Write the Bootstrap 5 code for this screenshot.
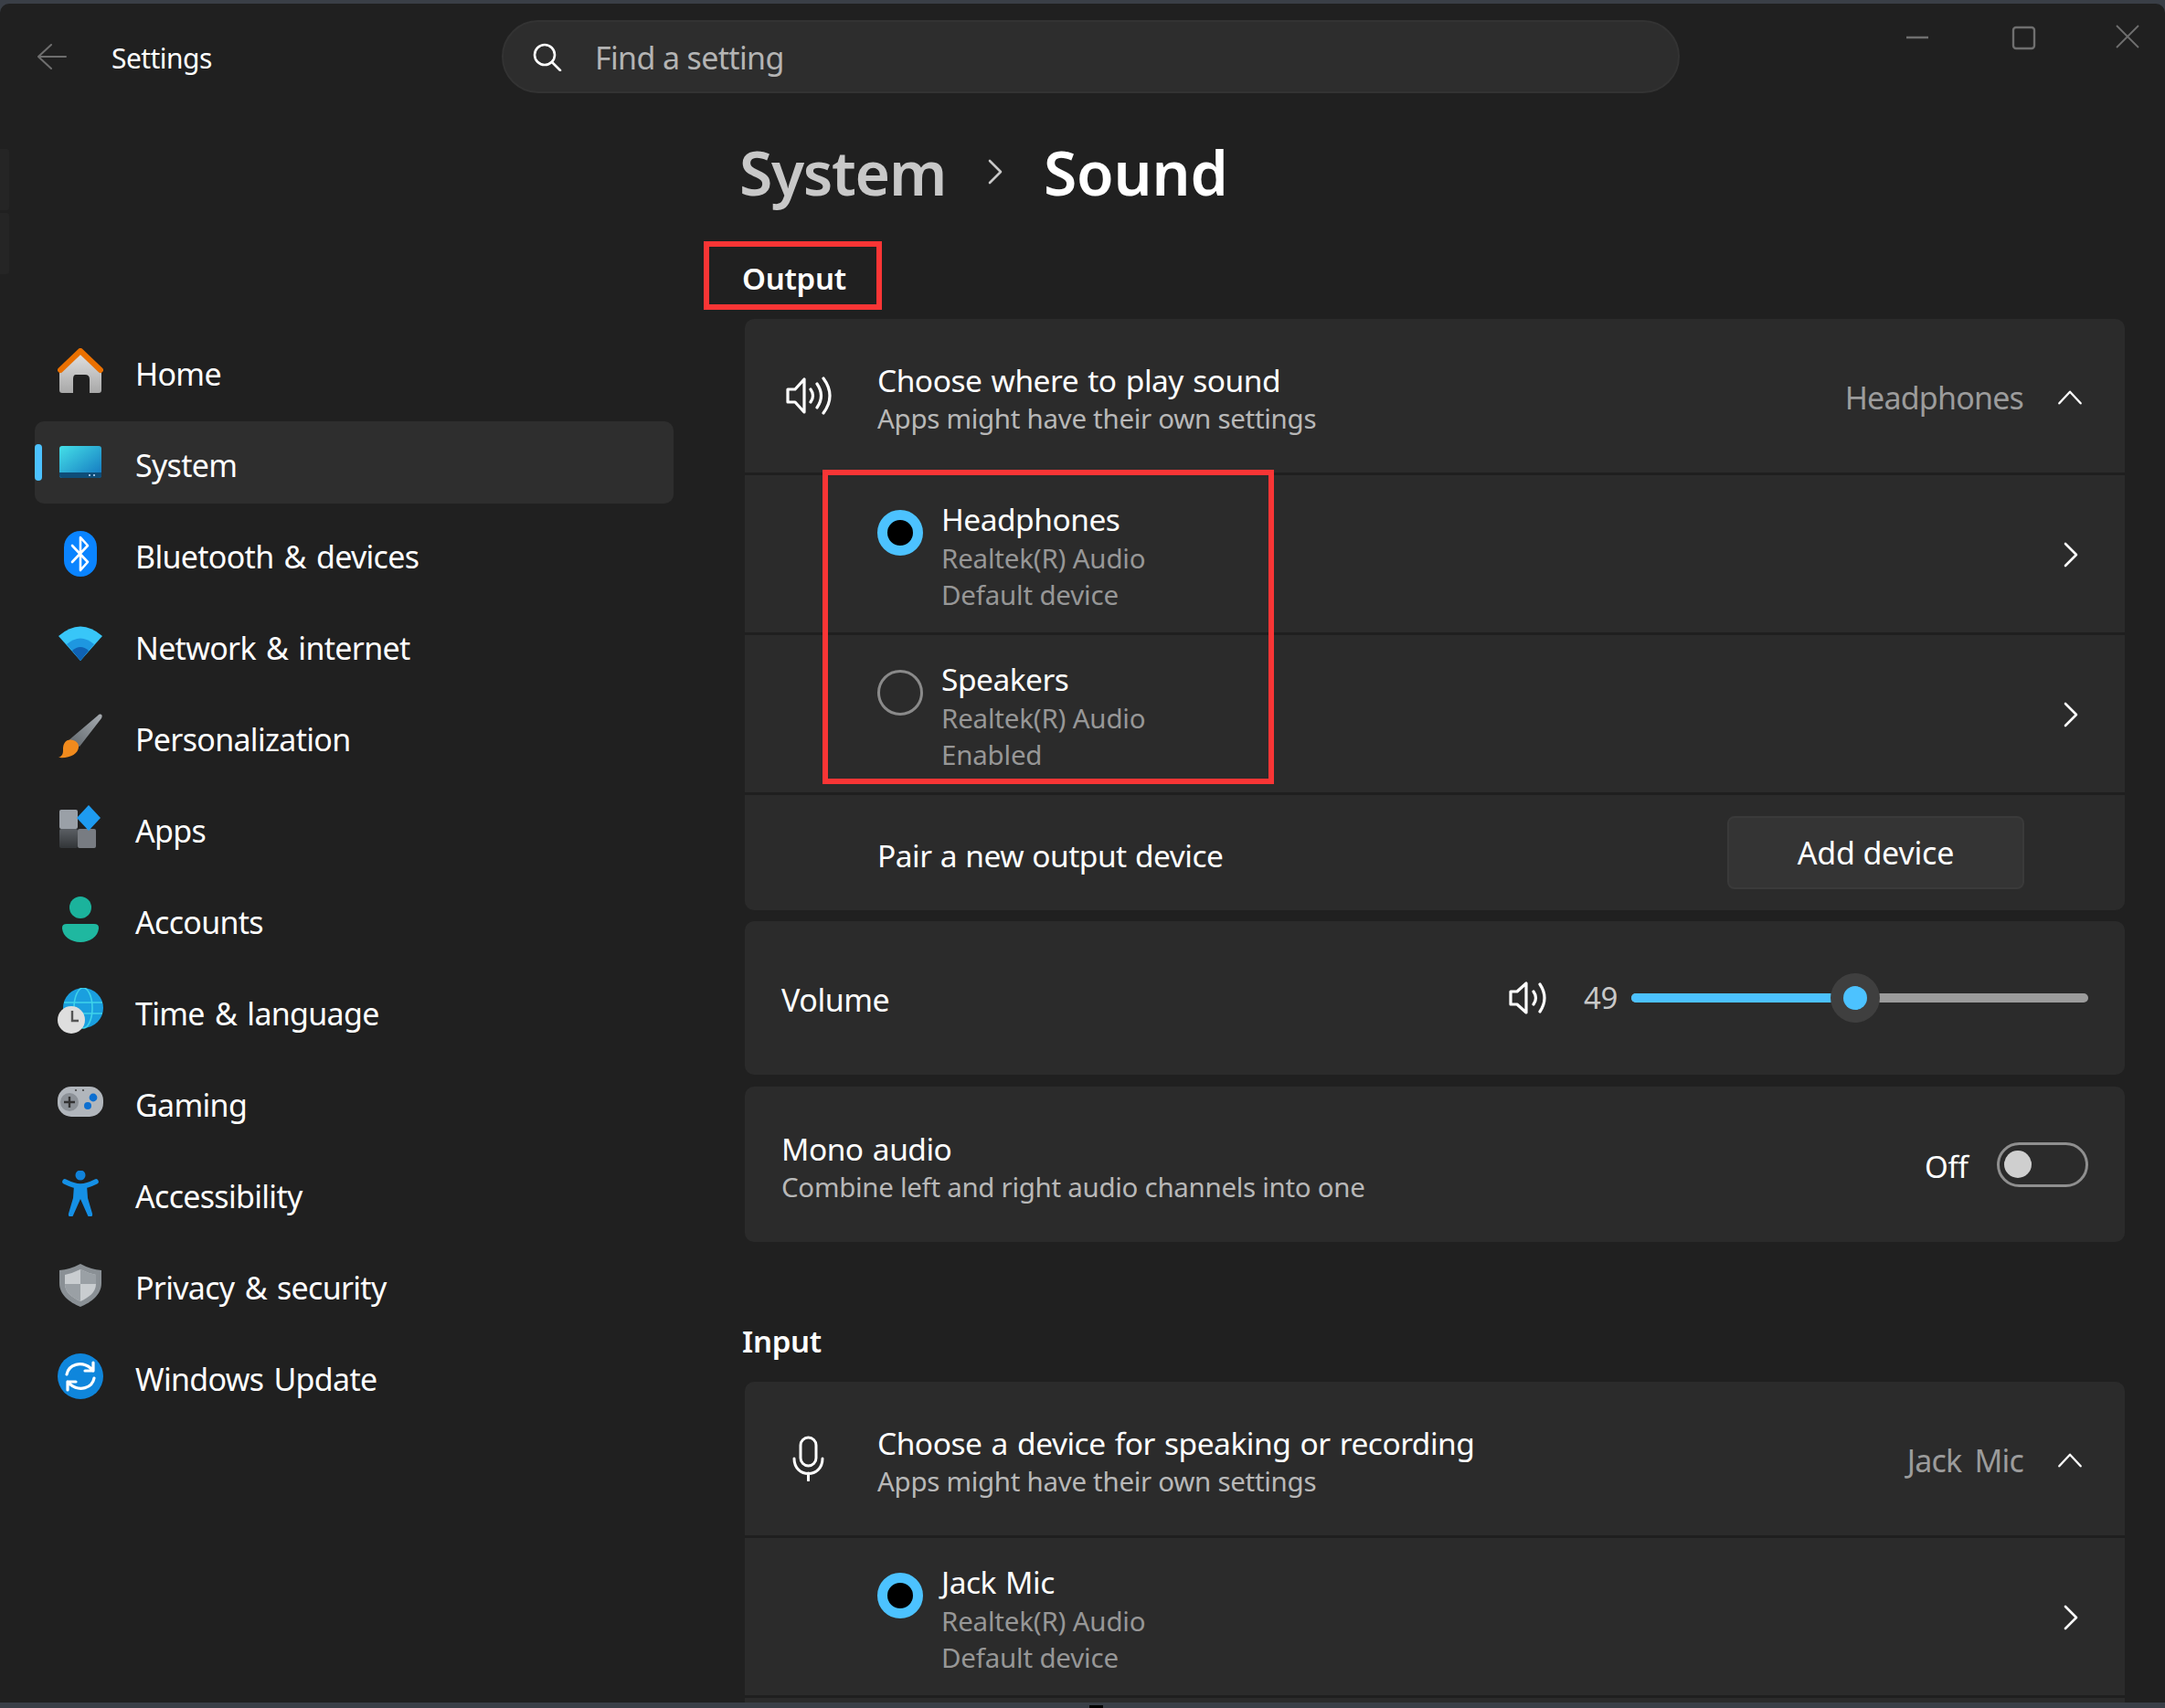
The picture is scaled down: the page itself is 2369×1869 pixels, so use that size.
<!DOCTYPE html>
<html lang="en">
<head>
<meta charset="utf-8">
<title>Settings</title>
<link href="https://cdn.jsdelivr.net/npm/bootstrap@5.3.0/dist/css/bootstrap.min.css" rel="stylesheet">
<style>
html,body{margin:0;width:2369px;height:1869px;overflow:hidden;background:#3a3f47;}
body{position:relative;font-family:"Noto Sans","Open Sans",sans-serif;color:#fff;}
.wnd{margin-top:4px;height:1859px;background:#202020;border-radius:10px 10px 0 0;overflow:hidden;position:relative;}
.topbar{height:98px;padding-top:18px;}
.backbtn{width:122px;padding-left:41px;height:80px;}
.apptitle{font-size:30px;width:427px;line-height:83px;letter-spacing:-.55px;}
.searchbox{width:1289px;height:80px;background:#2d2d2d;border:2px solid #333;border-radius:40px;padding-left:32px;font-size:34px;color:#b4b4b4;gap:36px;}
.searchlab{margin-top:3px;letter-spacing:-.65px;}
.winbtns{position:absolute;top:0;left:0;}
.sidecol{width:810px;flex:none;}
.sidelist{margin:259px 0 0 38px;width:699px;gap:10px;}
.sideitem{height:90px;padding-left:25px;font-size:34px;gap:35px;border-radius:10px;position:relative;color:#fff;letter-spacing:-.7px;word-spacing:3px;}
.sideitem span{margin-top:6px;}
.sideitem.on{background:#2e2e2e;}
.sideitem.on::before{content:"";position:absolute;left:0;top:25px;width:8px;height:40px;border-radius:4px;background:#4cc2ff;}
.ico{width:50px;height:50px;flex:none;}
.crumbs{height:138px;gap:0;font-size:66px;font-weight:600;line-height:100px;padding-top:36px;margin-left:-1px;letter-spacing:-1.3px;}
.crumb-a{color:#c8c8c8;}
.crumb-b{color:#fff;letter-spacing:-.2px;}
.crumb-c{width:107px;height:100px;padding-left:2px;}
.secthead{font-size:33px;font-weight:600;line-height:50px;margin-left:2px;letter-spacing:-.3px;}
.sh1{padding-top:40px;height:109px;}
.sh2{padding-top:84px;height:153px;}
.panel{background:#2b2b2b;border:0;border-radius:10px;margin-left:5px;width:1510px;color:#fff;overflow:hidden;}
.gap1{margin-top:12px;}
.gap2{margin-top:13px;}
.prow{display:flex;align-items:center;border-bottom:3px solid #1f1f1f;}
.prow:last-child{border-bottom:0;}
.phead{height:171px;}
.pdev{height:175px;padding-left:145px;align-items:flex-start;}
.ppair{height:126px;padding-left:145px;}
.picon{width:145px;padding-left:45px;flex:none;}
.ttl{font-size:33.5px;line-height:44px;letter-spacing:-.5px;word-spacing:2px;}
.sub1{font-size:29.5px;line-height:40px;color:#b8b8b8;letter-spacing:-.3px;}
.sub2{font-size:29.5px;line-height:39.5px;color:#979797;letter-spacing:-.2px;}
.headtxt{margin-top:5px;}
.monotxt{margin-top:5px;}
.pairtxt{margin-top:5px;word-spacing:1px;}
.devtxt{padding-top:26px;margin-left:20px;}
.devtxt .ttl{margin-bottom:1px;}
.hval{font-size:34px;color:#9c9c9c;letter-spacing:-.8px;word-spacing:6px;margin-top:4px;}
.chevbox{width:60px;margin:0 30px 0 21px;flex:none;text-align:center;}
.chevabs{margin-left:auto;align-self:center;padding-left:2px;padding-top:2px;}
.radioon,.radiooff{width:50px;height:50px;border-radius:50%;margin-top:38px;flex:none;}
.radioon{background:#000;border:11px solid #4cc2ff;}
.radiooff{border:3px solid #8a8a8a;}
.adddev{width:325px;height:80px;margin:0 110px 0 auto;background:#343434;border:2px solid #3a3a3a;color:#fff;font-size:34px;border-radius:8px;letter-spacing:-.2px;padding:0;}
.vol{height:168px;padding-left:40px;padding-right:40px;}
.mono{height:170px;padding-left:40px;padding-right:40px;}
.slabel{font-size:34px;letter-spacing:-.45px;margin-top:4px;}
.volicon{margin-left:auto;margin-right:0;}
.volnum{font-size:33px;color:#c8c8c8;width:52px;margin-left:38px;letter-spacing:-.5px;}
.slider{width:500px;height:10px;border-radius:5px;background:#9c9c9c;position:relative;}
.sfill{height:10px;width:44.4%;border-radius:5px 0 0 5px;background:#4cc2ff;}
.sthumb{position:absolute;left:218px;top:-22px;width:54px;height:54px;border-radius:50%;background:#3f3f3f;display:flex;align-items:center;justify-content:center;}
.sthumb i{display:block;width:26px;height:26px;border-radius:50%;background:#4cc2ff;}
.offlab{font-size:33px;width:79px;letter-spacing:-.3px;margin-top:6px;}
.tog{width:100px;height:49px;border:3px solid #8f8f8f;border-radius:25px;padding-left:5px;display:flex;align-items:center;flex:none;}
.tog i{display:block;width:30px;height:30px;border-radius:50%;background:#cfcfcf;}
.redbox{position:absolute;border:6px solid #f93535;pointer-events:none;}
.rb1{left:770px;top:264px;width:195px;height:75px;}
.rb2{left:900px;top:514px;width:494px;height:344px;}
.fbar{position:absolute;left:0;width:10px;height:67px;background:#252525;border-radius:0 3px 3px 0;}
.fb1{top:159px;}.fb2{top:229px;}
.notch{position:absolute;left:1192px;top:1866px;width:15px;height:3px;background:#000;}
</style>
</head>
<body>
<div class="wnd">
  <div class="fbar fb1"></div><div class="fbar fb2"></div>
  <div class="topbar d-flex align-items-start">
    <div class="backbtn d-flex align-items-center">
      <svg width="32" height="28" viewBox="0 0 32 28" fill="none" stroke="#6e6e6e" stroke-width="2" stroke-linecap="round"><path d="M1 14h30M15 1 1 14l14 13"/></svg>
    </div>
    <div class="apptitle">Settings</div>
    <div class="searchbox d-flex align-items-center">
      <svg width="32" height="31" viewBox="0 0 32 31" fill="none" stroke="#fff" stroke-width="2.6" stroke-linecap="round"><circle cx="13" cy="13" r="11"/><path d="m21 21 9 9"/></svg>
      <span class="searchlab">Find a setting</span>
    </div>
    <svg class="winbtns" width="2369" height="60" viewBox="0 0 2369 60" fill="none" stroke="#6f6f6f" stroke-width="2.4"><path d="M2086 37h24"/><rect x="2203" y="26" width="23" height="23" rx="3"/><path stroke-width="1.8" d="m2316 24 24 24m0-24-24 24"/></svg>
  </div>
  <div class="d-flex">
    <div class="sidecol">
      <nav class="sidelist nav flex-column">
        <a class="sideitem d-flex align-items-center text-decoration-none">
          <svg class="ico" viewBox="0 0 50 50"><defs><linearGradient id="h1" x1="0" y1="0" x2="0" y2="1"><stop offset="0" stop-color="#e2e2e2"/><stop offset="1" stop-color="#a8a8a8"/></linearGradient></defs><path fill="url(#h1)" fill-rule="evenodd" d="M25 4 48 25v21a3 3 0 0 1-3 3H35V34q0-5-5-5H20q-3 0-3 5v15H5a3 3 0 0 1-3-3V25z"/><path fill="none" stroke="#ea7000" stroke-width="6" stroke-linecap="round" stroke-linejoin="round" d="M3 24 25 3l22 21"/></svg>
          <span>Home</span></a>
        <a class="sideitem on d-flex align-items-center text-decoration-none">
          <svg class="ico" viewBox="0 0 50 50"><defs><linearGradient id="s1" x1="0" y1="0" x2="1" y2="1"><stop offset="0" stop-color="#45e0e8"/><stop offset="1" stop-color="#1275bf"/></linearGradient></defs><rect x="2" y="7" width="46" height="35" rx="3" fill="url(#s1)"/><path fill="#0f4d78" d="M2 36h46v3a3 3 0 0 1-3 3H5a3 3 0 0 1-3-3z"/><rect x="34" y="38" width="2" height="2" fill="#9bd"/><rect x="39" y="38" width="2" height="2" fill="#9bd"/></svg>
          <span>System</span></a>
        <a class="sideitem d-flex align-items-center text-decoration-none">
          <svg class="ico" viewBox="0 0 50 50"><rect x="7" y="0" width="36" height="50" rx="18" fill="#0a84ff"/><path fill="none" stroke="#fff" stroke-width="2.6" stroke-linejoin="round" stroke-linecap="round" d="M16 16l17 18-8 9V7l8 9-17 18"/></svg>
          <span>Bluetooth &amp; devices</span></a>
        <a class="sideitem d-flex align-items-center text-decoration-none">
          <svg class="ico" viewBox="0 0 50 50"><path fill="#38c6f8" d="M1 15Q25-6 49 15L25 42z"/><path fill="#1e97e0" d="M10 24Q25 11 40 24L25 42z"/><path fill="#0f62b4" d="M16 31Q25 23 34 31L25 42z"/></svg>
          <span>Network &amp; internet</span></a>
        <a class="sideitem d-flex align-items-center text-decoration-none">
          <svg class="ico" viewBox="0 0 50 50"><defs><linearGradient id="b1" x1="1" y1="0" x2="0" y2="1"><stop offset="0" stop-color="#a7acb1"/><stop offset="1" stop-color="#5e656b"/></linearGradient></defs><path fill="url(#b1)" d="M44 2c3-3 6-1 4 3L24 36 11 30z"/><path fill="#f08a1d" d="M11 29c6-2 13 2 12 8-1 7-9 12-22 11 5-2 5-5 5-9s1-8 5-10z"/></svg>
          <span>Personalization</span></a>
        <a class="sideitem d-flex align-items-center text-decoration-none">
          <svg class="ico" viewBox="0 0 50 50"><defs><linearGradient id="a1" x1="0" y1="0" x2="0" y2="1"><stop offset="0" stop-color="#5b5f64"/><stop offset="1" stop-color="#323538"/></linearGradient></defs><rect x="2" y="5" width="20" height="21" rx="2" fill="#9aa0a7"/><rect x="2" y="26" width="20" height="21" rx="2" fill="url(#a1)"/><rect x="22" y="26" width="20" height="21" rx="2" fill="#787c82"/><path fill="#1e9bf0" d="M34 0 47 14 34 28 21 14z"/></svg>
          <span>Apps</span></a>
        <a class="sideitem d-flex align-items-center text-decoration-none">
          <svg class="ico" viewBox="0 0 50 50"><circle cx="25" cy="12" r="12" fill="#1bb39c"/><path fill="#1fb8a0" d="M10 30h30q5 0 5 4c0 9-9 16-20 16S5 43 5 34q0-4 5-4z"/></svg>
          <span>Accounts</span></a>
        <a class="sideitem d-flex align-items-center text-decoration-none">
          <svg class="ico" viewBox="0 0 50 50"><circle cx="28" cy="22" r="22" fill="#1a9fdf"/><g fill="none" stroke="#3fd3ea" stroke-width="1.6"><ellipse cx="28" cy="22" rx="10" ry="22"/><path d="M7 16h42M7 28h42"/></g><circle cx="15" cy="35" r="15" fill="#dedede"/><path fill="none" stroke="#555" stroke-width="2.4" d="M16 25v11h7"/></svg>
          <span>Time &amp; language</span></a>
        <a class="sideitem d-flex align-items-center text-decoration-none">
          <svg class="ico" viewBox="0 0 50 50"><rect x="0" y="8" width="50" height="33" rx="15" fill="#b1b6bc"/><circle cx="13" cy="25" r="10" fill="#8c9197"/><path stroke="#333" stroke-width="2.4" d="M7 25h12M13 19v12"/><circle cx="39" cy="20" r="4.4" fill="#0d6fd0"/><circle cx="33" cy="29" r="4" fill="#0d6fd0"/><circle cx="20" cy="12" r="1.1" fill="#444"/><circle cx="28" cy="12" r="1.1" fill="#444"/></svg>
          <span>Gaming</span></a>
        <a class="sideitem d-flex align-items-center text-decoration-none">
          <svg class="ico" viewBox="0 0 50 50"><circle cx="25" cy="5" r="5.5" fill="#1082da"/><path fill="none" stroke="#1590e6" stroke-width="5.6" stroke-linecap="round" d="M8 12c6 3 11 5 17 5s11-2 17-5"/><path fill="#1590e6" d="M18 16h14l1 14 5 17c1 4-4 5-5 2l-8-18-8 18c-1 3-6 2-5-2l5-17z"/></svg>
          <span>Accessibility</span></a>
        <a class="sideitem d-flex align-items-center text-decoration-none">
          <svg class="ico" viewBox="0 0 50 50"><path fill="#8a9095" d="M25 2q11 6 23 7v14c0 13-11 21-23 26C13 44 2 36 2 23V9Q14 8 25 2z"/><path fill="#c9cdd0" d="M25 8q8 4 17 6v10c0 9-8 15-17 19C16 39 8 33 8 24V14q9-2 17-6z"/><path fill="#9aa0a5" d="M25 8q8 4 17 6v10H25zM25 24v19C16 39 8 33 8 24z"/></svg>
          <span>Privacy &amp; security</span></a>
        <a class="sideitem d-flex align-items-center text-decoration-none">
          <svg class="ico" viewBox="0 0 50 50"><circle cx="25" cy="25" r="25" fill="#0f86dc"/><path fill="none" stroke="#fff" stroke-width="3.2" stroke-linecap="round" stroke-linejoin="round" d="M10 23C12 12 26 8 36 16l3 3M39 10v9h-9M40 27c-2 11-16 15-26 7l-3-3M11 40v-9h9"/></svg>
          <span>Windows Update</span></a>
      </nav>
    </div>
    <main class="flex-grow-1">
      <div class="crumbs d-flex align-items-start">
        <span class="crumb-a">System</span>
        <span class="crumb-c d-flex justify-content-center align-items-center"><svg width="16" height="28" viewBox="0 0 16 28" fill="none" stroke="#c8c8c8" stroke-width="2.6" stroke-linecap="round" stroke-linejoin="round"><path d="m2 2 12 12L2 26"/></svg></span>
        <span class="crumb-b">Sound</span>
      </div>
      <div class="secthead sh1">Output</div>
      <section class="panel card">
        <div class="prow phead">
          <div class="picon"><svg width="52" height="42" viewBox="0 0 52 42" fill="none" stroke="#fff" stroke-width="3.2" stroke-linecap="round" stroke-linejoin="round" style="display:block"><path d="M2 14h8L20 3v36L10 28H2z"/><path d="M27 14q5 7 0 14M34 8q9 13 0 26M41 2q14 19 0 38"/></svg></div>
          <div class="headtxt"><div class="ttl">Choose where to play sound</div><div class="sub1">Apps might have their own settings</div></div>
          <div class="hval ms-auto">Headphones</div>
          <div class="chevbox"><svg width="28" height="18" viewBox="0 0 30 20" fill="none" stroke="#fff" stroke-width="2.6" stroke-linecap="round" stroke-linejoin="round"><path d="m2 17 13-14 13 14"/></svg></div>
        </div>
        <div class="prow pdev">
          <div class="radioon"></div>
          <div class="devtxt"><div class="ttl">Headphones</div><div class="sub2">Realtek(R) Audio</div><div class="sub2">Default device</div></div>
          <div class="chevbox chevabs"><svg width="16" height="28" viewBox="0 0 16 28" fill="none" stroke="#fff" stroke-width="2.6" stroke-linecap="round" stroke-linejoin="round"><path d="m2 2 12 12L2 26"/></svg></div>
        </div>
        <div class="prow pdev">
          <div class="radiooff"></div>
          <div class="devtxt"><div class="ttl">Speakers</div><div class="sub2">Realtek(R) Audio</div><div class="sub2">Enabled</div></div>
          <div class="chevbox chevabs"><svg width="16" height="28" viewBox="0 0 16 28" fill="none" stroke="#fff" stroke-width="2.6" stroke-linecap="round" stroke-linejoin="round"><path d="m2 2 12 12L2 26"/></svg></div>
        </div>
        <div class="prow ppair">
          <div class="ttl pairtxt">Pair a new output device</div>
          <button type="button" class="btn adddev">Add device</button>
        </div>
      </section>
      <section class="panel card gap1">
        <div class="prow vol">
          <div class="slabel">Volume</div>
          <svg class="volicon" width="44" height="36" viewBox="0 0 44 36" fill="none" stroke="#fff" stroke-width="3.2" stroke-linecap="round" stroke-linejoin="round"><path d="M2 11h7L19 2v32l-10-9H2z"/><path d="M27 11q5 7 0 14M34 3q10 15 0 30"/></svg>
          <div class="volnum">49</div>
          <div class="slider"><div class="sfill"></div><div class="sthumb"><i></i></div></div>
        </div>
      </section>
      <section class="panel card gap2">
        <div class="prow mono">
          <div class="monotxt"><div class="ttl">Mono audio</div><div class="sub1">Combine left and right audio channels into one</div></div>
          <div class="offlab ms-auto">Off</div>
          <div class="tog"><i></i></div>
        </div>
      </section>
      <div class="secthead sh2">Input</div>
      <section class="panel card">
        <div class="prow phead">
          <div class="picon" style="padding-left:52px"><svg width="35" height="50" viewBox="0 0 35 50" fill="none" stroke="#fff" stroke-width="3" stroke-linecap="round" style="display:block"><rect x="9" y="2" width="17" height="31" rx="8.5"/><path d="M2 25c0 22 31 22 31 0M17.500 41v8"/></svg></div>
          <div class="headtxt"><div class="ttl">Choose a device for speaking or recording</div><div class="sub1">Apps might have their own settings</div></div>
          <div class="hval ms-auto">Jack Mic</div>
          <div class="chevbox"><svg width="28" height="18" viewBox="0 0 30 20" fill="none" stroke="#fff" stroke-width="2.6" stroke-linecap="round" stroke-linejoin="round"><path d="m2 17 13-14 13 14"/></svg></div>
        </div>
        <div class="prow pdev">
          <div class="radioon"></div>
          <div class="devtxt"><div class="ttl">Jack Mic</div><div class="sub2">Realtek(R) Audio</div><div class="sub2">Default device</div></div>
          <div class="chevbox chevabs"><svg width="16" height="28" viewBox="0 0 16 28" fill="none" stroke="#fff" stroke-width="2.6" stroke-linecap="round" stroke-linejoin="round"><path d="m2 2 12 12L2 26"/></svg></div>
        </div>
        <div class="prow pdev"></div>
      </section>
    </main>
  </div>
</div>
<div class="redbox rb1"></div>
<div class="redbox rb2"></div>
<div class="notch"></div>
<script src="https://cdn.jsdelivr.net/npm/bootstrap@5.3.0/dist/js/bootstrap.bundle.min.js"></script>
</body>
</html>
